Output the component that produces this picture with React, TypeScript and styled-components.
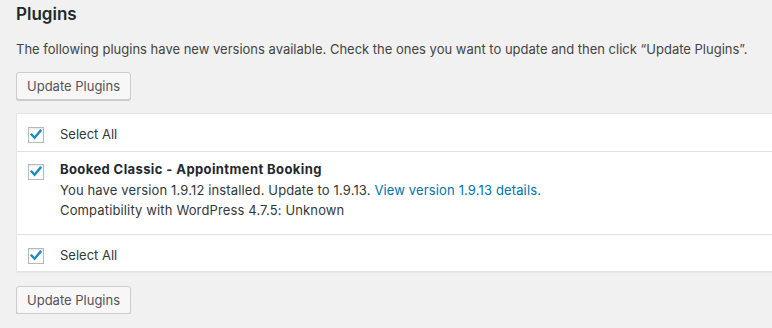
import * as React from 'react';
import styled, { createGlobalStyle } from 'styled-components';

const GlobalStyle = createGlobalStyle`
    html, body {
        margin: 0;
        background: #f1f1f1;
        overflow: hidden;
    }
    body {
        font-family: Inter, "Liberation Sans", sans-serif;
        font-size: 13px;
        color: #444;
    }
`;

const Wrap = styled.div`
    padding: 0 0 0 16px;
`;

const Title = styled.h2`
    margin: 0;
    padding-top: 2px;
    font-size: 17px;
    line-height: 24px;
    font-weight: 600;
    color: #23282d;
`;

const Intro = styled.p`
    margin: 13px 0 0;
    line-height: 20px;
`;

const Button = styled.button<{ $gap: number }>`
    display: block;
    margin-top: ${p => p.$gap}px;
    height: 28px;
    padding: 0 10px 1px;
    font-family: inherit;
    font-size: 13px;
    line-height: 26px;
    color: #555;
    background: #f7f7f7;
    border: 1px solid #ccc;
    border-radius: 3px;
    box-shadow: 0 1px 0 #ccc;
    cursor: pointer;
`;

const Table = styled.div`
    margin: 13px -2px 0 0;
    background: #fff;
    border: 1px solid #e5e5e5;
    box-shadow: 0 1px 1px rgba(0, 0, 0, 0.04);
`;

const Row = styled.div<{ $height: number }>`
    display: grid;
    grid-template-columns: 43px 1fr;
    min-height: ${p => p.$height}px;
    box-sizing: border-box;
    & + & {
        border-top: 1px solid #e1e1e1;
    }
`;

const CheckCell = styled.div<{ $top: number }>`
    padding: ${p => p.$top}px 0 0 11px;
    line-height: 0;
`;

const Box = styled.span`
    display: inline-block;
    width: 16px;
    height: 16px;
    box-sizing: border-box;
    border: 1px solid #b4b9be;
    background: #fff;
    box-shadow: inset 0 1px 2px rgba(0, 0, 0, 0.1);
    svg {
        display: block;
    }
`;

const Label = styled.div`
    padding-top: 12px;
    line-height: 16px;
    color: #32373c;
`;

const Info = styled.div`
    padding: 7px 0 8px;
    color: #32373c;
`;

const PluginName = styled.strong`
    display: block;
    font-weight: 700;
    line-height: 20px;
    margin-bottom: 2px;
    letter-spacing: 0.4px;
    color: #23282d;
`;

const Line = styled.div`
    line-height: 19.5px;
    letter-spacing: 0.14px;
`;

const Link = styled.a`
    color: #0073aa;
    text-decoration: none;
`;

function Checkbox() {
    return (
        <Box>
            <svg width="14" height="14" viewBox="0 0 14 14">
                <path d="M2.6 6.6 L5.6 9.8 L11.4 2.8" fill="none" stroke="#1e8cbe" strokeWidth="2.4" strokeLinecap="square" />
            </svg>
        </Box>
    );
}

function SelectAllRow() {
    return (
        <Row $height={37}>
            <CheckCell $top={13}><Checkbox /></CheckCell>
            <Label>Select All</Label>
        </Row>
    );
}

export default function App() {
    return (
        <Wrap>
            <GlobalStyle />
            <Title>Plugins</Title>
            <Intro>The following plugins have new versions available. Check the ones you want to update and then click “Update Plugins”.</Intro>
            <Button $gap={13}>Update Plugins</Button>
            <Table>
                <SelectAllRow />
                <Row $height={83}>
                    <CheckCell $top={12}><Checkbox /></CheckCell>
                    <Info>
                        <PluginName>Booked Classic - Appointment Booking</PluginName>
                        <Line>You have version 1.9.12 installed. Update to 1.9.13. <Link href="#">View version 1.9.13 details.</Link></Line>
                        <Line>Compatibility with WordPress 4.7.5: Unknown</Line>
                    </Info>
                </Row>
                <SelectAllRow />
            </Table>
            <Button $gap={14}>Update Plugins</Button>
        </Wrap>
    );
}
